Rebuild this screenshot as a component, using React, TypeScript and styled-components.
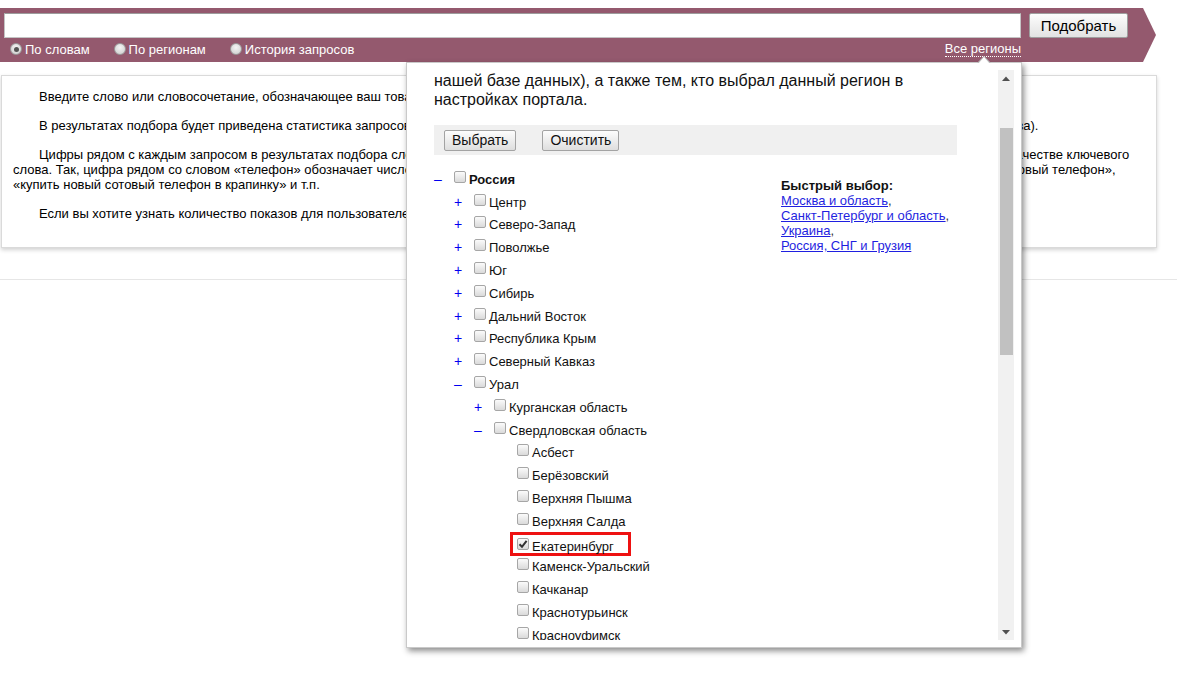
import React, { useLayoutEffect, useRef } from 'react';
import styled, { createGlobalStyle, css } from 'styled-components';

type TreeNode = {
    name: string;
    level: number;
    toggle?: '+' | '–';
    bold?: boolean;
    checked?: boolean;
    marked?: boolean;
};

const tree: TreeNode[] = [
    { name: 'Россия', level: 0, toggle: '–', bold: true },
    { name: 'Центр', level: 1, toggle: '+' },
    { name: 'Северо-Запад', level: 1, toggle: '+' },
    { name: 'Поволжье', level: 1, toggle: '+' },
    { name: 'Юг', level: 1, toggle: '+' },
    { name: 'Сибирь', level: 1, toggle: '+' },
    { name: 'Дальний Восток', level: 1, toggle: '+' },
    { name: 'Республика Крым', level: 1, toggle: '+' },
    { name: 'Северный Кавказ', level: 1, toggle: '+' },
    { name: 'Урал', level: 1, toggle: '–' },
    { name: 'Курганская область', level: 2, toggle: '+' },
    { name: 'Свердловская область', level: 2, toggle: '–' },
    { name: 'Асбест', level: 3 },
    { name: 'Берёзовский', level: 3 },
    { name: 'Верхняя Пышма', level: 3 },
    { name: 'Верхняя Салда', level: 3 },
    { name: 'Екатеринбург', level: 3, checked: true, marked: true },
    { name: 'Каменск-Уральский', level: 3 },
    { name: 'Качканар', level: 3 },
    { name: 'Краснотурьинск', level: 3 },
    { name: 'Красноуфимск', level: 3 },
    { name: 'Кушва', level: 3 },
    { name: 'Нижний Тагил', level: 3 },
];

const quickLinks = [
    'Москва и область',
    'Санкт-Петербург и область',
    'Украина',
    'Россия, СНГ и Грузия',
];

const Check = ({ checked }: { checked?: boolean }) => (
    <CheckBox>
        {checked && (
            <svg width="10" height="10" viewBox="0 0 10 10">
                <path
                    d="M1.5 5.2 L4 7.8 L8.6 1.8"
                    fill="none"
                    stroke="#333"
                    strokeWidth="2"
                />
            </svg>
        )}
    </CheckBox>
);

const Arrow = ({ down }: { down?: boolean }) => (
    <ScrollButton>
        <svg width="8" height="5" viewBox="0 0 8 5">
            <path d={down ? 'M0 0 H8 L4 4.5 Z' : 'M0 5 H8 L4 0.5 Z'} fill="#505050" />
        </svg>
    </ScrollButton>
);

const App = () => {
    const scrollRef = useRef<HTMLDivElement>(null);

    useLayoutEffect(() => {
        if (scrollRef.current) {
            scrollRef.current.scrollTop = 28;
        }
    }, []);

    return (
        <Page>
            <GlobalStyle />
            <Band>
                <SearchRow>
                    <SearchInput type="text" defaultValue="" />
                    <GoButton>Подобрать</GoButton>
                </SearchRow>
                <OptionsRow>
                    <Option>
                        <Radio $on />
                        По словам
                    </Option>
                    <Option>
                        <Radio />
                        По регионам
                    </Option>
                    <Option>
                        <Radio />
                        История запросов
                    </Option>
                    <RegionsLink>Все регионы</RegionsLink>
                </OptionsRow>
            </Band>

            <InfoBox>
                <Para>
                    Введите слово или словосочетание, обозначающее ваш товар
                    или услугу, и нажмите кнопку «Подобрать».
                </Para>
                <Para>
                    В результатах подбора будет приведена статистика запросов
                    на Яндексе, включающих указанное слово или словосочетание
                    (с учётом словоформ искомого слова).
                </Para>
                <Para>
                    Цифры рядом с каждым запросом в результатах подбора слов
                    дают предварительный прогноз числа показов в месяц, которое
                    получите, выбрав этот запрос в качестве ключевого
                    <br />
                    слова. Так, цифра рядом со словом «телефон» обозначает число
                    показов по всем запросам со словом «телефон»: «купить
                    телефон б/у», «мобильный телефон», «новый телефон»,
                    <br />
                    «купить новый сотовый телефон в крапинку» и т.п.
                </Para>
                <Para>
                    Если вы хотите узнать количество показов для пользователей
                    из определенного региона, воспользуйтесь выбором регионов.
                </Para>
            </InfoBox>
            <Divider />

            <Popup>
                <ScrollArea ref={scrollRef}>
                    <Intro>
                        Выберите регион, чтобы узнать число показов тем, кто
                        находится в нём (по
                        <br />
                        нашей базе данных), а также тем, кто выбрал данный
                        регион в
                        <br />
                        настройках портала.
                    </Intro>
                    <ActionBar>
                        <SmallButton>Выбрать</SmallButton>
                        <SmallButton>Очистить</SmallButton>
                    </ActionBar>
                    <Body>
                        <Tree>
                            {tree.map((node) => {
                                const content = (
                                    <>
                                        <Check checked={node.checked} />
                                        <Label $bold={node.bold}>
                                            {node.name}
                                        </Label>
                                    </>
                                );
                                return (
                                    <Row key={node.name} $level={node.level}>
                                        {node.toggle ? (
                                            <Toggle>{node.toggle}</Toggle>
                                        ) : (
                                            <Toggle />
                                        )}
                                        {node.marked ? (
                                            <Marked>{content}</Marked>
                                        ) : (
                                            content
                                        )}
                                    </Row>
                                );
                            })}
                        </Tree>
                        <Quick>
                            <QuickTitle>Быстрый выбор:</QuickTitle>
                            {quickLinks.map((l, i) => (
                                <QuickLine key={l}>
                                    <Link>{l}</Link>
                                    {i < quickLinks.length - 1 && ','}
                                </QuickLine>
                            ))}
                        </Quick>
                    </Body>
                </ScrollArea>
                <ScrollBar>
                    <Arrow />
                    <Thumb />
                    <Spacer />
                    <Arrow down />
                </ScrollBar>
            </Popup>
        </Page>
    );
};

export default App;

const purple = '#94596e';

const GlobalStyle = createGlobalStyle`
  html, body {
    margin: 0;
    padding: 0;
    background: #fff;
  }
  body {
    font-family: "Liberation Sans", Arial, sans-serif;
    font-size: 13px;
    color: #000;
  }
`;

const Page = styled.div`
    position: relative;
    width: 1177px;
    height: 692px;
    padding-top: 8px;
    box-sizing: border-box;
    overflow: hidden;
`;

const Band = styled.div`
    position: relative;
    width: 1143px;
    height: 54px;
    box-sizing: border-box;
    padding: 5px 15px 2px 4px;
    background: ${purple};
    &::after {
        content: '';
        position: absolute;
        left: 100%;
        top: 0;
        border-top: 27px solid transparent;
        border-bottom: 27px solid transparent;
        border-left: 13px solid ${purple};
    }
`;

const SearchRow = styled.div`
    display: flex;
    gap: 8px;
    height: 25px;
`;

const SearchInput = styled.input`
    flex: 1;
    height: 25px;
    box-sizing: border-box;
    margin: 0;
    padding: 0 4px;
    border: 1px solid #c4c4c4;
    border-top-color: #9c9c9c;
    background: #fff;
    font: 15px 'Liberation Sans', Arial, sans-serif;
    outline: none;
`;

const GoButton = styled.button`
    width: 99px;
    height: 25px;
    margin: 0;
    padding: 0;
    border: 1px solid #9f9f9f;
    border-radius: 2px;
    background: linear-gradient(#fdfdfd, #e2e2e2);
    color: #000;
    font: 15px 'Liberation Sans', Arial, sans-serif;
`;

const OptionsRow = styled.div`
    display: flex;
    align-items: center;
    height: 22px;
    padding: 0 107px 0 6px;
    color: #fff;
    font-size: 13px;
`;

const Option = styled.label`
    display: flex;
    align-items: center;
    margin-right: 24px;
`;

const Radio = styled.span<{ $on?: boolean }>`
    position: relative;
    width: 12px;
    height: 12px;
    margin-right: 3px;
    box-sizing: border-box;
    border: 1px solid #9a9a9a;
    border-radius: 50%;
    background: radial-gradient(circle at 50% 35%, #f4f4f4, #cbcbcb);
    ${(p) =>
        p.$on &&
        css`
            &::after {
                content: '';
                position: absolute;
                left: 2.5px;
                top: 2.5px;
                width: 5px;
                height: 5px;
                border-radius: 50%;
                background: #555;
            }
        `}
`;

const RegionsLink = styled.span`
    margin-left: auto;
    color: #fff;
    border-bottom: 1px dotted #fff;
    line-height: 14px;
`;

const InfoBox = styled.div`
    width: 1156px;
    height: 173px;
    margin: 13px 0 0 1px;
    box-sizing: border-box;
    padding: 13px 13px 0 11px;
    border: 1px solid #dadada;
    box-shadow: 0 2px 4px rgba(0, 0, 0, 0.18);
`;

const Para = styled.p`
    margin: 0 0 14px;
    line-height: 15px;
    text-indent: 26px;
`;

const Divider = styled.div`
    height: 1px;
    margin-top: 31px;
    background: #e6e6e6;
`;

const Popup = styled.div`
    position: absolute;
    left: 406px;
    top: 62px;
    width: 616px;
    height: 586px;
    box-sizing: border-box;
    display: flex;
    padding: 7px;
    background: #fff;
    border: 1px solid #c9c9c9;
    box-shadow: 2px 3px 6px rgba(0, 0, 0, 0.45);
    &::before,
    &::after {
        content: '';
        position: absolute;
        border-style: solid;
        border-color: transparent;
    }
    &::before {
        left: 570px;
        top: -7px;
        border-width: 0 7px 7px 7px;
        border-bottom-color: #bdbdbd;
    }
    &::after {
        left: 571px;
        top: -6px;
        border-width: 0 6px 7px 6px;
        border-bottom-color: #fff;
    }
`;

const ScrollArea = styled.div`
    flex: 1;
    overflow: hidden;
    padding: 10px 41px 0 20px;
`;

const Intro = styled.p`
    margin: 0;
    font-size: 16px;
    line-height: 19px;
    color: #111;
    white-space: nowrap;
`;

const ActionBar = styled.div`
    display: flex;
    align-items: center;
    gap: 26px;
    height: 30px;
    margin-top: 16px;
    padding-left: 10px;
    background: #f0f0f0;
`;

const SmallButton = styled.button`
    height: 21px;
    margin: 0;
    padding: 0 7px;
    border: 1px solid #a3a3a3;
    border-radius: 2px;
    background: linear-gradient(#fdfdfd, #dedede);
    color: #111;
    font: 14px 'Liberation Sans', Arial, sans-serif;
`;

const Body = styled.div`
    display: flex;
    margin-top: 13px;
`;

const Tree = styled.div`
    width: 347px;
    flex: none;
`;

const Row = styled.div<{ $level: number }>`
    display: flex;
    align-items: center;
    height: 22.8px;
    padding-left: ${(p) => p.$level * 20 + (p.$level === 3 ? 3 : 0)}px;
    white-space: nowrap;
`;

const Toggle = styled.span`
    width: 20px;
    flex: none;
    color: #0000f0;
    font-size: 14px;
    line-height: 15px;
`;

const CheckBox = styled.span`
    display: flex;
    align-items: center;
    justify-content: center;
    width: 12px;
    height: 12px;
    margin-bottom: 5px;
    flex: none;
    box-sizing: border-box;
    border: 1px solid #a6a6a6;
    border-radius: 2px;
    background: linear-gradient(#fbfbfb, #dadada);
`;

const Label = styled.span<{ $bold?: boolean }>`
    margin-left: 3px;
    font-weight: ${(p) => (p.$bold ? 700 : 400)};
    color: #111;
`;

const Marked = styled.span`
    display: inline-flex;
    align-items: center;
    height: 24px;
    box-sizing: border-box;
    margin-left: -7px;
    padding: 4px 14px 0 4px;
    border: 3px solid #ee1111;
`;

const Quick = styled.div`
    margin-top: 10px;
    line-height: 15px;
`;

const QuickTitle = styled.div`
    font-weight: 700;
    color: #111;
`;

const QuickLine = styled.div`
    color: #333;
`;

const Link = styled.a`
    color: #1f1fe0;
    text-decoration: underline;
    cursor: pointer;
`;

const ScrollBar = styled.div`
    width: 16px;
    flex: none;
    display: flex;
    flex-direction: column;
    align-items: center;
    background: #f1f1f1;
`;

const ScrollButton = styled.div`
    display: flex;
    align-items: center;
    justify-content: center;
    width: 16px;
    height: 16px;
    flex: none;
`;

const Thumb = styled.div`
    width: 13px;
    height: 227px;
    margin-top: 42px;
    background: #c1c1c1;
`;

const Spacer = styled.div`
    flex: 1;
`;
